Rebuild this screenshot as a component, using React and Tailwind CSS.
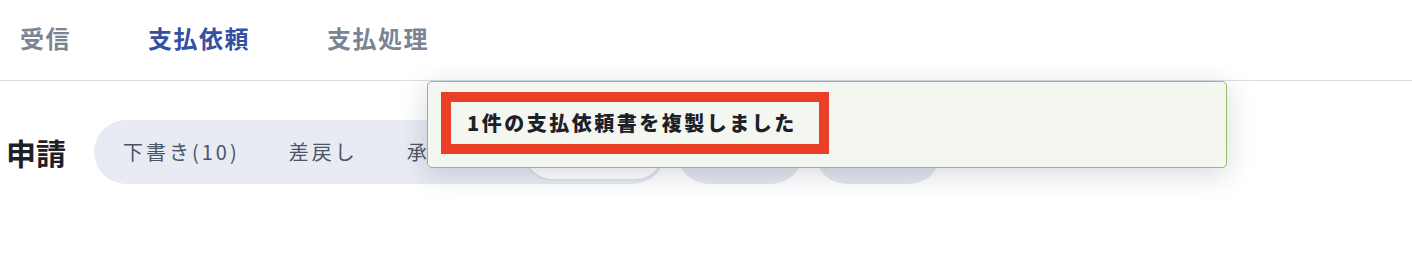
import React from 'react';

const font = { fontFamily: '"Noto Sans CJK JP", "Noto Sans", sans-serif' };

// ─── TOP TABS ───────────────────────────────────────────────
function TopTabs() {
  const tabs = [
    { label: '受信', active: false },
    { label: '支払依頼', active: true },
    { label: '支払処理', active: false },
  ];
  return (
    <nav className="h-[81px] border-b border-[#d9dee7] flex items-center pl-[20px] gap-[77px] pb-[4px]">
      {tabs.map((t) => (
        <span
          key={t.label}
          className={
            'text-[24px] font-bold tracking-[1.5px] leading-none ' +
            (t.active ? 'text-[#3450a3]' : 'text-[#7a8494]')
          }
        >
          {t.label}
        </span>
      ))}
    </nav>
  );
}

// ─── STATUS FILTER ROW ──────────────────────────────────────
function StatusRow() {
  const segments = ['下書き(10)', '差戻し', '承認中'];
  return (
    <div className="flex items-center pt-[39px] pl-[6px]">
      <h2 className="text-[30px] font-bold text-[#1d2127] leading-none mr-[28px]">申請</h2>
      <div className="flex items-center h-[64px] w-[571px] rounded-full bg-[#e8ebf3] pl-[29px] pr-[5px]">
        {segments.map((s) => (
          <span key={s} className="shrink-0 text-[20px] text-[#4b5565] tracking-[3px] mr-[49px] whitespace-nowrap">
            {s}
          </span>
        ))}
        <span className="shrink-0 ml-auto h-[54px] w-[138px] rounded-full bg-white ring-2 ring-[#dde1ea] flex items-center justify-center text-[20px] text-[#1d2127]">
          承認済
        </span>
      </div>
      <span className="ml-[12px] h-[64px] w-[126px] rounded-full bg-[#e3e6ee]" />
      <span className="ml-[12px] h-[64px] w-[126px] rounded-full bg-[#e3e6ee]" />
    </div>
  );
}

// ─── COPY TOAST ─────────────────────────────────────────────
function Toast() {
  return (
    <div className="absolute left-[427px] top-[81px] w-[800px] h-[87px] rounded-[5px] border border-[#8dbf6c] bg-[#f4f7f0] shadow-[0_6px_28px_rgba(30,40,60,0.18)] pl-[13px] pt-[10px]">
      <div className="inline-flex items-center h-[62px] w-[388px] border-[10px] border-[#e93e27] pl-[16px]">
        <span className="text-[20px] font-black text-[#1d2127] tracking-[2.5px] leading-none whitespace-nowrap">
          1件の支払依頼書を複製しました
        </span>
      </div>
    </div>
  );
}

export default function App() {
  return (
    <div className="relative w-[1412px] h-[262px] bg-white overflow-hidden" style={font}>
      <TopTabs />
      <StatusRow />
      <Toast />
    </div>
  );
}
